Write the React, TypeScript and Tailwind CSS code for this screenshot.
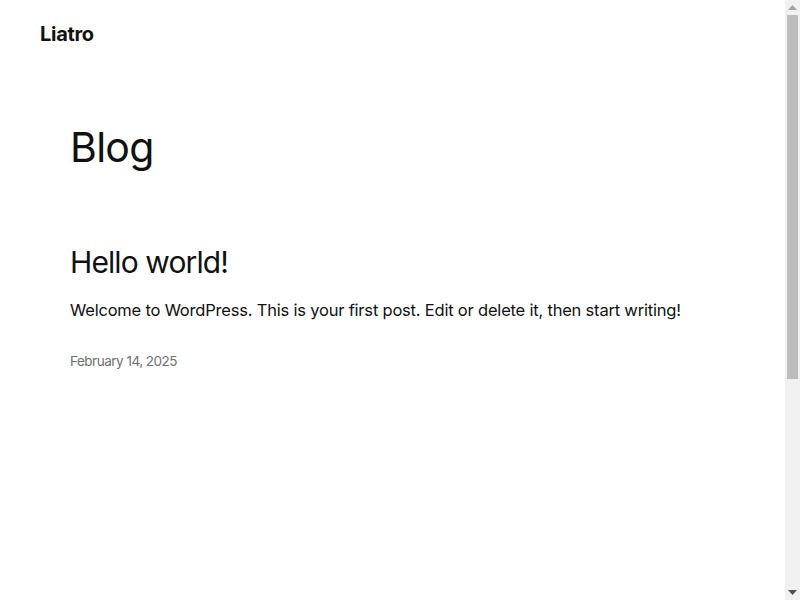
function Scrollbar() {
  return (
    <div className="flex h-full w-[15px] shrink-0 flex-col bg-[#f1f1f1]">
      <div className="flex h-[15px] items-center justify-center">
        <svg width="9" height="5" viewBox="0 0 9 5">
          <path d="M0 5 L4.5 0 L9 5 Z" fill="#a3a3a3" />
        </svg>
      </div>
      <div className="flex-1 px-[2px]">
        <div className="h-[364px] bg-[#bdbdbd]" />
      </div>
      <div className="flex h-[15px] items-center justify-center">
        <svg width="9" height="5" viewBox="0 0 9 5">
          <path d="M0 0 L9 0 L4.5 5 Z" fill="#505050" />
        </svg>
      </div>
    </div>
  );
}

export default function App() {
  return (
    <div
      className="flex h-[600px] overflow-hidden bg-white text-[#111111]"
      style={{ fontFamily: 'Inter, "Noto Sans", sans-serif' }}
    >
      <div className="min-w-0 flex-1">
        {/* Header */}
        <header className="flex h-[68px] items-center px-10">
          <a className="text-[20px] font-bold tracking-[-0.3px]">Liatro</a>
        </header>

        {/* Main */}
        <main className="px-[70px] pt-[59px]">
          <h1 className="text-[41px] font-normal leading-none tracking-[-0.7px]">Blog</h1>

          <article className="mt-[79px]">
            <h2 className="text-[30px] font-normal leading-none tracking-[-0.9px]">Hello world!</h2>
            <p className="mt-[21px] text-[16.5px] tracking-[-0.2px]">
              Welcome to WordPress. This is your first post. Edit or delete it, then start writing!
            </p>
            <p className="mt-[28px] text-[13.5px] tracking-[-0.5px] text-[#6e6e6e]">February 14, 2025</p>
          </article>
        </main>
      </div>
      <Scrollbar />
    </div>
  );
}
